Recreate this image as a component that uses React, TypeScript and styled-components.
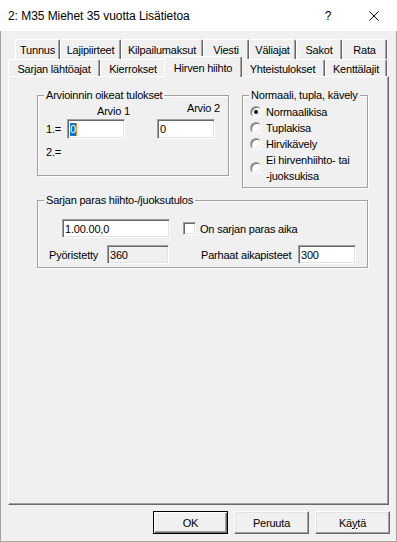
import React from "react";
import styled, { createGlobalStyle } from "styled-components";

const GlobalStyle = createGlobalStyle`
  html, body {
    margin: 0;
    padding: 0;
    background: #ffffff;
  }
  body {
    font-family: "Liberation Sans", Arial, sans-serif;
    font-size: 11px;
    letter-spacing: -0.2px;
    color: #000;
  }
  * {
    box-sizing: border-box;
  }
`;

const Dialog = styled.div`
  width: 397px;
  height: 542px;
  display: flex;
  flex-direction: column;
`;

const TitleBar = styled.div`
  flex: 0 0 31px;
  display: flex;
  align-items: center;
  background: #fff;
  font-size: 12px;
  letter-spacing: -0.05px;
`;

const Caption = styled.div`
  flex: 1;
  padding-left: 8px;
  white-space: nowrap;
`;

const CaptionButton = styled.div`
  width: 46px;
  height: 31px;
  display: flex;
  align-items: center;
  justify-content: center;
`;

const Body = styled.div`
  flex: 1;
  display: flex;
  flex-direction: column;
  background: #f0f0f0;
  border: 1px solid #a3a3a3;
  border-top: none;
  padding: 8px 7px 0;
`;

const TabRow = styled.div<{ $indent: number; $h: number }>`
  display: flex;
  height: ${p => p.$h}px;
  margin-left: ${p => p.$indent}px;
`;

const Tab = styled.div<{ $w: number; $active?: boolean }>`
  flex: 0 0 auto;
  width: ${p => p.$w + (p.$active ? 4 : 0)}px;
  display: flex;
  align-items: center;
  justify-content: center;
  white-space: nowrap;
  background: #f0f0f0;
  border-top: 1px solid #fff;
  border-left: 1px solid #fff;
  border-right: 1px solid #696969;
  box-shadow: inset -1px 0 #a0a0a0;
  border-radius: 2px 2px 0 0;
  padding-top: 1px;
  ${p =>
    p.$active &&
    `
    position: relative;
    z-index: 2;
    margin: -3px -2px -1px;
  `}
`;

const Panel = styled.div`
  height: 429px;
  border-top: 1px solid #fff;
  border-left: 1px solid #fff;
  border-right: 1px solid #696969;
  border-bottom: 1px solid #696969;
  box-shadow: inset -1px -1px #a0a0a0;
  padding: 12px 0 0 28px;
`;

const GroupRow = styled.div`
  display: flex;
  align-items: flex-start;
  gap: 13px;
`;

const Group = styled.fieldset<{ $w: number; $h: number; $top?: number }>`
  width: ${p => p.$w}px;
  height: ${p => p.$h}px;
  margin: ${p => p.$top ?? 0}px 0 0;
  padding: 0 8px;
  min-width: 0;
  border: 1px solid #a0a0a0;
  box-shadow: inset 1px 1px #fff, 1px 1px 0 #fff;
`;

const GroupTitle = styled.legend`
  padding: 0 2px;
  margin-left: -2px;
  line-height: 13px;
  white-space: nowrap;
  background: #f0f0f0;
`;

const ScoreGrid = styled.div`
  display: grid;
  grid-template-columns: 21px 58px 32px 58px;
  grid-template-rows: 17px 20px;
  align-items: center;
`;

const ColumnHead = styled.div<{ $col: number; $drop: number }>`
  grid-column: ${p => p.$col};
  align-self: start;
  white-space: nowrap;
  margin: ${p => p.$drop}px 0 0 30px;
  line-height: 13px;
`;

const RowLabel = styled.div<{ $gap?: number }>`
  line-height: 13px;
  margin-top: ${p => p.$gap ?? 0}px;
  white-space: nowrap;
`;

const Edit = styled.div<{ $w: number; $h?: number; $readOnly?: boolean }>`
  width: ${p => p.$w}px;
  height: ${p => p.$h ?? 19}px;
  display: flex;
  align-items: center;
  padding-left: 2px;
  background: ${p => (p.$readOnly ? "#f0f0f0" : "#fff")};
  border: 1px solid;
  border-color: #a0a0a0 #fff #fff #a0a0a0;
  box-shadow: inset 1px 1px #696969, inset -1px -1px #e3e3e3;
  white-space: nowrap;
`;

const Selection = styled.span`
  background: #0078d7;
  color: #fff;
  line-height: 13px;
  border-right: 1px solid #ff8728;
`;

const RadioList = styled.div`
  display: flex;
  flex-direction: column;
  margin-top: 2px;
`;

const RadioRow = styled.label`
  display: flex;
  align-items: center;
  gap: 4px;
  line-height: 16px;
  margin-left: -1px;
  white-space: nowrap;
`;

const RadioDot = styled.span<{ $checked?: boolean }>`
  flex: 0 0 12px;
  width: 12px;
  height: 12px;
  border-radius: 50%;
  background: #fff;
  border: 1px solid;
  border-color: #a0a0a0 #fff #fff #a0a0a0;
  box-shadow: inset 1px 1px #696969, inset -1px -1px #e3e3e3;
  display: flex;
  align-items: center;
  justify-content: center;
  &::after {
    content: "";
    width: 4px;
    height: 4px;
    border-radius: 50%;
    background: ${p => (p.$checked ? "#000" : "transparent")};
  }
`;

const FieldRow = styled.div<{ $top: number }>`
  display: flex;
  align-items: center;
  margin-top: ${p => p.$top}px;
`;

const Text = styled.span<{ $ml?: number; $w?: number }>`
  margin-left: ${p => p.$ml ?? 0}px;
  width: ${p => (p.$w ? `${p.$w}px` : "auto")};
  flex: 0 0 auto;
  white-space: nowrap;
`;

const Spacer = styled.div<{ $w: number }>`
  flex: 0 0 ${p => p.$w}px;
`;

const CheckBox = styled.span`
  flex: 0 0 13px;
  width: 13px;
  height: 13px;
  background: #fff;
  border: 1px solid;
  border-color: #a0a0a0 #fff #fff #a0a0a0;
  box-shadow: inset 1px 1px #696969, inset -1px -1px #e3e3e3;
`;

const ButtonBar = styled.div`
  display: flex;
  justify-content: flex-end;
  gap: 6px;
  margin: 6px -1px 0 0;
`;

const Button = styled.div<{ $default?: boolean }>`
  width: 75px;
  height: 23px;
  display: flex;
  align-items: center;
  justify-content: center;
  background: #f0f0f0;
  border: 1px solid;
  border-color: ${p => (p.$default ? "#000" : "#fff #696969 #696969 #fff")};
  box-shadow: ${p =>
    p.$default
      ? "inset 1px 1px #fff, inset -1px -1px #696969, inset -2px -2px #a0a0a0"
      : "inset -1px -1px #a0a0a0, inset 1px 1px #e3e3e3"};
`;

const backTabs = [
  { label: "Tunnus", w: 45 },
  { label: "Lajipiirteet", w: 61 },
  { label: "Kilpailumaksut", w: 82 },
  { label: "Viesti", w: 46 },
  { label: "Väliajat", w: 47 },
  { label: "Sakot", w: 46 },
  { label: "Rata", w: 45 },
];

const frontTabs = [
  { label: "Sarjan lähtöajat", w: 92 },
  { label: "Kierrokset", w: 66 },
  { label: "Hirven hiihto", w: 74, active: true },
  { label: "Yhteistulokset", w: 85 },
  { label: "Kenttälajit", w: 62 },
];

const CloseIcon = () => (
  <svg width="10" height="10" viewBox="0 0 10 10">
    <path d="M0.5 0.5 L9.5 9.5 M9.5 0.5 L0.5 9.5" stroke="#000" strokeWidth="1" fill="none" />
  </svg>
);

export default function App() {
  return (
    <Dialog>
      <GlobalStyle />
      <TitleBar>
        <Caption>2: M35 Miehet 35 vuotta Lisätietoa</Caption>
        <CaptionButton>?</CaptionButton>
        <CaptionButton>
          <CloseIcon />
        </CaptionButton>
      </TitleBar>
      <Body>
        <TabRow $indent={7} $h={20}>
          {backTabs.map(t => (
            <Tab key={t.label} $w={t.w}>
              {t.label}
            </Tab>
          ))}
        </TabRow>
        <TabRow $indent={0} $h={17}>
          {frontTabs.map(t => (
            <Tab key={t.label} $w={t.w} $active={t.active}>
              {t.label}
            </Tab>
          ))}
        </TabRow>
        <Panel>
          <GroupRow>
            <Group $w={192} $h={87}>
              <GroupTitle>Arvioinnin oikeat tulokset</GroupTitle>
              <ScoreGrid>
                <ColumnHead $col={2} $drop={3}>Arvio 1</ColumnHead>
                <ColumnHead $col={4} $drop={0}>Arvio 2</ColumnHead>
                <RowLabel>1.=</RowLabel>
                <Edit $w={58} $h={20}>
                  <Selection>0</Selection>
                </Edit>
                <div />
                <Edit $w={58} $h={20}>0</Edit>
              </ScoreGrid>
              <RowLabel $gap={7}>2.=</RowLabel>
            </Group>
            <Group $w={126} $h={99}>
              <GroupTitle>Normaali, tupla, kävely</GroupTitle>
              <RadioList>
                <RadioRow>
                  <RadioDot $checked />
                  Normaalikisa
                </RadioRow>
                <RadioRow>
                  <RadioDot />
                  Tuplakisa
                </RadioRow>
                <RadioRow>
                  <RadioDot />
                  Hirvikävely
                </RadioRow>
                <RadioRow>
                  <RadioDot />
                  <span>
                    Ei hirvenhiihto- tai
                    <br />
                    -juoksukisa
                  </span>
                </RadioRow>
              </RadioList>
            </Group>
          </GroupRow>
          <Group $w={331} $h={74} $top={6}>
            <GroupTitle>Sarjan paras hiihto-/juoksutulos</GroupTitle>
            <FieldRow $top={12}>
              <Spacer $w={16} />
              <Edit $w={108}>1.00.00,0</Edit>
              <Spacer $w={13} />
              <CheckBox />
              <Text $ml={4}>On sarjan paras aika</Text>
            </FieldRow>
            <FieldRow $top={7}>
              <Text $ml={3} $w={58}>Pyöristetty</Text>
              <Edit $w={62} $readOnly>360</Edit>
              <Text $ml={32} $w={97}>Parhaat aikapisteet</Text>
              <Edit $w={58}>300</Edit>
            </FieldRow>
          </Group>
        </Panel>
        <ButtonBar>
          <Button $default>OK</Button>
          <Button>Peruuta</Button>
          <Button>
            <span>
              Kä<u>y</u>tä
            </span>
          </Button>
        </ButtonBar>
      </Body>
    </Dialog>
  );
}
